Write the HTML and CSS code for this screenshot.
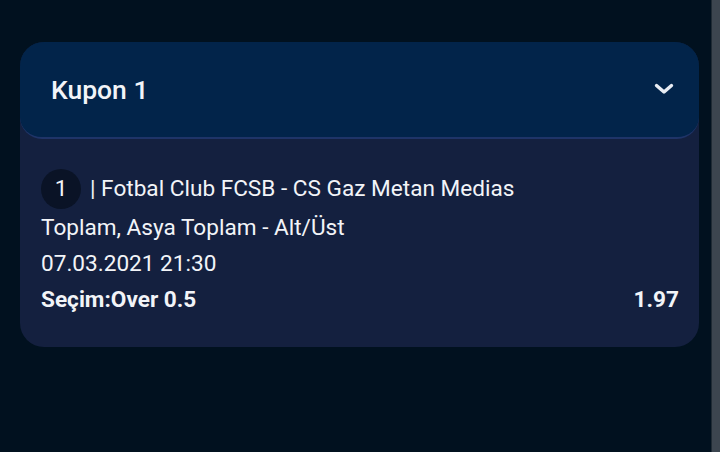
FILE: index.html
```html
<!DOCTYPE html>
<html lang="tr">
<head>
<meta charset="utf-8">
<link rel="stylesheet" href="styles.css">
</head>
<body>
<div class="page">
  <div class="content">
    <div class="card">
      <div class="card-head">
        <span class="title">Kupon 1</span>
        <svg class="chev" width="20" height="12" viewBox="0 0 20 12"><path d="M2.5 2.5 L10 9 L17.5 2.5" fill="none" stroke="#e8ecf3" stroke-width="3.4" stroke-linecap="round" stroke-linejoin="round"/></svg>
      </div>
      <div class="card-body">
        <div class="row first"><span class="num">1</span><span class="match">| Fotbal Club FCSB - CS Gaz Metan Medias</span></div>
        <div class="row">Toplam, Asya Toplam - Alt/Üst</div>
        <div class="row">07.03.2021 21:30</div>
        <div class="row sel"><span>Seçim:Over 0.5</span><span>1.97</span></div>
      </div>
    </div>
  </div>
  <div class="scroll"></div>
</div>
</body>
</html>
```
FILE: styles.css
```css
html, body { margin: 0; padding: 0; }
body {
  width: 720px; height: 452px; overflow: hidden;
  background: #01111f;
  font-family: Roboto, "Noto Sans", sans-serif;
  color: #f2f4f8;
}
.page { display: flex; height: 452px; }
.content { flex: 1; padding: 42px 0 0 20px; }
.scroll { width: 8px; background: #3c454f; border-left: 1px solid #1f2a34; }
.card {
  width: 679px;
  background: #14203f;
  border-radius: 24px;
  overflow: hidden;
}
.card-head {
  height: 95px;
  background: #02244a;
  border-bottom: 2px solid #1f3468;
  border-radius: 0 0 22px 22px;
  display: flex; align-items: center; justify-content: space-between;
  padding: 0 25px 0 31px;
}
.title { font-size: 26.5px; font-weight: 500; }
.chev { display: block; margin-top: -2px; }
.card-body { padding: 29px 20px 30px 21px; }
.row { font-size: 22.6px; line-height: 36px; }
.row.sel { line-height: 35px; }
.row.first { display: flex; align-items: center; height: 42px; }
.num {
  width: 40px; height: 40px; border-radius: 50%;
  background: #0a1326;
  display: flex; align-items: center; justify-content: center;
  margin-right: 9px;
}
.sel { display: flex; justify-content: space-between; font-weight: 700; }
```
